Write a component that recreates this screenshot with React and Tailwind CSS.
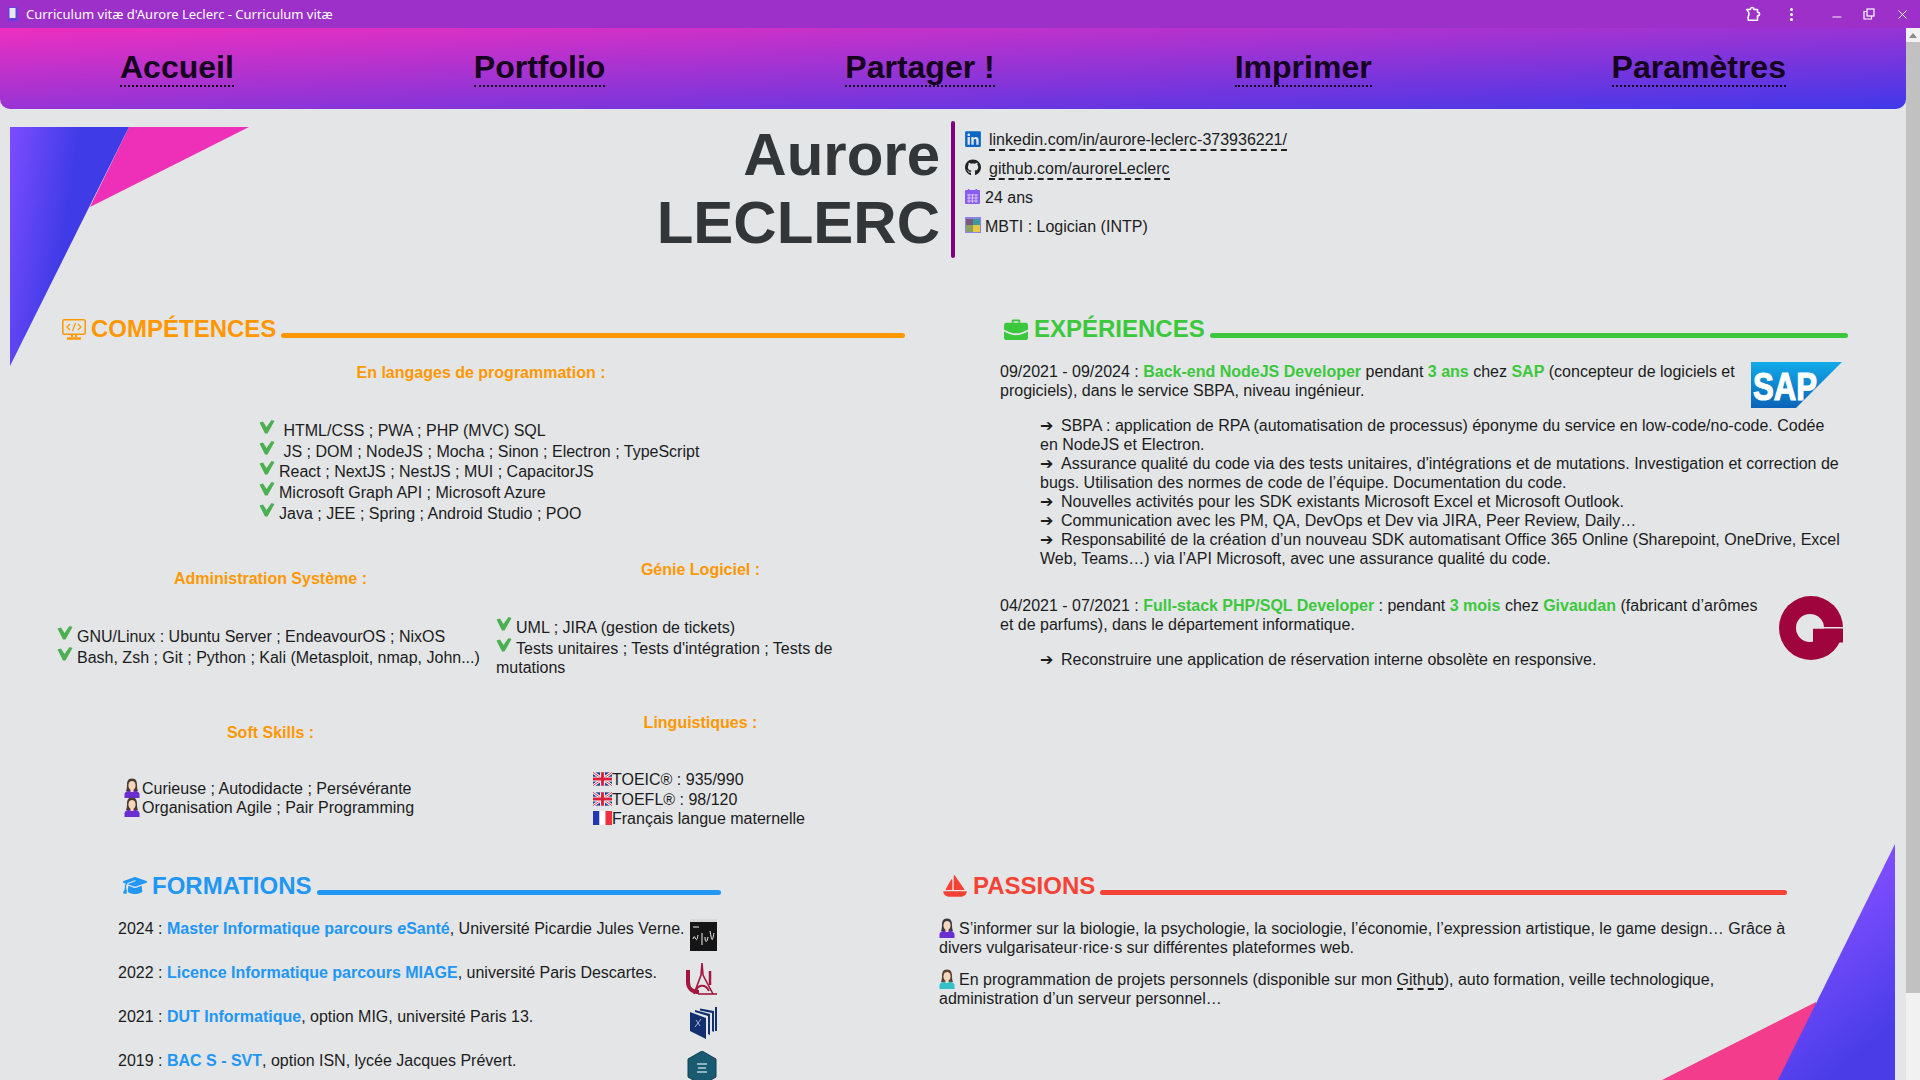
import { EllipsisVertical, Minus, X } from 'lucide-react';
import { FaLinkedin, FaGithub, FaGraduationCap, FaSailboat } from 'react-icons/fa6';

function Check() {
    return (
        <svg viewBox="0 0 16 14" className="inline-block w-[16px] h-[14px] mr-[4px] align-[2px]">
            <path d="M0.5 2.5 L4 1.5 L7.5 7 L12.5 0 L15.5 1 L8.5 13.5 L6 13.5 Z" fill="#4caf50" />
        </svg>
    );
}

function Person({ body = '#6a2fd0', hair = '#4a3a30', wide = false }) {
    return (
        <svg viewBox="0 0 16 20" className={`inline-block h-[20px] align-[-4px] ${wide ? 'w-[20px] pr-[4px]' : 'w-[18px] pr-[2px]'}`}>
            <path d="M8 0.5 C3.5 0.5 3 4 3 7 C3 10 2.5 12 2 13 L14 13 C13.5 12 13 10 13 7 C13 4 12.5 0.5 8 0.5 Z" fill={hair} />
            <ellipse cx="8" cy="7.5" rx="3.6" ry="4.6" fill="#f6d5bd" />
            <path d="M0.5 20 L0.5 16 C1 13.5 4 12.5 8 12.5 C12 12.5 15 13.5 15.5 16 L15.5 20 Z" fill={body} />
            <rect x="6.5" y="10.5" width="3" height="3.5" fill="#f6d5bd" />
        </svg>
    );
}

function FlagUk() {
    return (
        <svg viewBox="0 0 20 14" className="inline-block w-[19px] h-[14px] align-[-1px]">
            <rect width="20" height="14" fill="#1f3f8f" />
            <path d="M0 0 L20 14 M20 0 L0 14" stroke="#fff" strokeWidth="3" />
            <path d="M0 0 L20 14 M20 0 L0 14" stroke="#d8203a" strokeWidth="1" />
            <path d="M10 0 V14 M0 7 H20" stroke="#fff" strokeWidth="5" />
            <path d="M10 0 V14 M0 7 H20" stroke="#d8203a" strokeWidth="3" />
        </svg>
    );
}

function FlagFr() {
    return (
        <svg viewBox="0 0 19 14" className="inline-block w-[19px] h-[14px] align-[-1px]">
            <rect width="6.5" height="14" fill="#2338b0" />
            <rect x="6.5" width="6" height="14" fill="#fff" />
            <rect x="12.5" width="6.5" height="14" fill="#ee3040" />
        </svg>
    );
}

function MonitorCode() {
    return (
        <svg viewBox="0 0 24 21" className="w-[24px] h-[21px] mb-[3px] ml-[1px] -mr-[1px]" fill="none" stroke="#ff9800">
            <rect x="0.8" y="0.8" width="22.4" height="14.5" rx="1.5" strokeWidth="1.5" />
            <path d="M8 5 L5 8 L8 11 M16 5 L19 8 L16 11 M13.5 4 L10.5 12" strokeWidth="1.2" />
            <path d="M10 15 V18 M14 15 V18" strokeWidth="2" />
            <path d="M5 19.5 H19" strokeWidth="2.4" />
        </svg>
    );
}

function Briefcase() {
    return (
        <svg viewBox="0 0 25 22" className="w-[24px] h-[23px] mb-[2px] ml-[1px]">
            <path d="M8 4 V2 C8 1 9 0.5 10 0.5 H15 C16 0.5 17 1 17 2 V4 H15 V2.5 H10 V4 Z" fill="#3cc83c" />
            <path d="M2.5 4 H22.5 C24 4 25 5 25 6.5 V11 C20 14 16 15 12.5 15 C9 15 5 14 0 11 V6.5 C0 5 1 4 2.5 4 Z" fill="#3cc83c" />
            <path d="M0 13 C4 15.5 9 17 12.5 17 C16 17 21 15.5 25 13 V19.5 C25 21 24 22 22.5 22 H2.5 C1 22 0 21 0 19.5 Z" fill="#3cc83c" />
        </svg>
    );
}

function SapLogo() {
    return (
        <svg viewBox="0 0 91 46" className="float-right w-[91px] h-[46px] ml-[15px] mr-[6px]">
            <defs>
                <linearGradient id="sapBlue" x1="0" y1="0" x2="0" y2="1">
                    <stop offset="0" stopColor="#12aae8" />
                    <stop offset="1" stopColor="#0a64b8" />
                </linearGradient>
            </defs>
            <polygon points="0,0 91,0 45,46 0,46" fill="url(#sapBlue)" />
            <text x="2" y="38" fill="#fff" stroke="#fff" strokeWidth="1.2" fontFamily="'Liberation Sans', sans-serif" fontWeight="700" fontSize="38" textLength="64" lengthAdjust="spacingAndGlyphs">SAP</text>
        </svg>
    );
}

function GivaudanLogo() {
    return (
        <svg viewBox="0 0 64 64" className="float-right w-[64px] h-[64px] ml-[21px] mr-[5px]">
            <circle cx="32" cy="32" r="32" fill="#a0043c" />
            <circle cx="31" cy="32" r="14" fill="#e3e5e7" />
            <rect x="34" y="32.5" width="30" height="14" fill="#a0043c" />
            <rect x="26" y="31" width="38" height="1.5" fill="#e3e5e7" />
        </svg>
    );
}

function JulesVerneLogo() {
    return (
        <svg viewBox="0 0 27 32" className="w-[27px] h-[32px] ml-auto">
            <rect width="27" height="32" fill="#151515" />
            <rect y="0" width="27" height="3" fill="#d8d8d8" />
            <path d="M3 8 H9 M3 20 C5 12 6 28 8 16 M12 14 L12 26 M15 18 C15 24 17 24 18 18 M20 12 C22 22 22 24 24 14" stroke="#eee" strokeWidth="1" fill="none" />
        </svg>
    );
}

function ParisLogo() {
    return (
        <svg viewBox="0 0 32 32" className="w-[32px] h-[32px] ml-auto" fill="none" stroke="#a3173f">
            <path d="M3 7 V19 C3 26 8 29 14 29" strokeWidth="4" />
            <path d="M17 0 L16 12 L9 31 M17 0 L18 12 L28 31" strokeWidth="1.6" />
            <path d="M25 8 V22" strokeWidth="2.5" />
            <path d="M11 28 C13 21 21 21 24 28" strokeWidth="1.8" />
            <path d="M13 31 H32" strokeWidth="1.6" />
        </svg>
    );
}

function Paris13Logo() {
    return (
        <svg viewBox="0 0 27 32" className="w-[27px] h-[32px] ml-auto">
            <polygon points="0,5 16,11 16,32 0,24" fill="#12306e" />
            <polygon points="5,3 20,7 20,28 18,27 18,9 5,5" fill="#12306e" />
            <polygon points="10,1.5 24,4 24,25 22,24 22,6 10,3.5" fill="#12306e" />
            <rect x="25" y="0" width="2" height="24" fill="#12306e" />
            <path d="M5 20 L11 12 M6 13 L10 19" stroke="#c8d8f0" strokeWidth="0.8" />
        </svg>
    );
}

function HexLogo() {
    return (
        <svg viewBox="0 0 30 34" className="w-[30px] h-[34px] ml-auto">
            <polygon points="15,0 29,8 29,26 15,34 1,26 1,8" fill="#185a70" stroke="#0e3f52" />
            <path d="M10 13 H20 M11 17 H19 M10 21 H20" stroke="#b8d0d8" strokeWidth="1.4" />
        </svg>
    );
}

function SectionTitle({ icon, color, lineClass, children }) {
    return (
        <div className="flex items-end">
            {icon}
            <h2 className={`text-[24px] leading-[28px] font-bold ml-[6px] ${color}`}>{children}</h2>
            <div className={`flex-1 h-[5px] rounded-full ml-[5px] mb-[5px] ${lineClass}`} />
        </div>
    );
}

function SubTitle({ className = '', children }) {
    return <h3 className={`text-center font-bold text-[#ff9800] leading-[18px] ${className}`}>{children}</h3>;
}

const navLinks = ['Accueil', 'Portfolio', 'Partager !', 'Imprimer', 'Paramètres'];

const formations = [
    { year: '2024', title: <>Master Informatique parcours <i>e</i>Santé</>, rest: ', Université Picardie Jules Verne.', logo: <JulesVerneLogo /> },
    { year: '2022', title: 'Licence Informatique parcours MIAGE', rest: ', université Paris Descartes.', logo: <ParisLogo /> },
    { year: '2021', title: 'DUT Informatique', rest: ', option MIG, université Paris 13.', logo: <Paris13Logo /> },
    { year: '2019', title: 'BAC S - SVT', rest: ', option ISN, lycée Jacques Prévert.', logo: <HexLogo /> },
];

const sapTasks = [
    'SBPA : application de RPA (automatisation de processus) éponyme du service en low-code/no-code. Codée en NodeJS et Electron.',
    'Assurance qualité du code via des tests unitaires, d\'intégrations et de mutations. Investigation et correction de bugs. Utilisation des normes de code de l’équipe. Documentation du code.',
    'Nouvelles activités pour les SDK existants Microsoft Excel et Microsoft Outlook.',
    'Communication avec les PM, QA, DevOps et Dev via JIRA, Peer Review, Daily…',
    'Responsabilité de la création d’un nouveau SDK automatisant Office 365 Online (Sharepoint, OneDrive, Excel Web, Teams…) via l’API Microsoft, avec une assurance qualité du code.',
];

const Green = ({ children }) => <b className="text-[#3cc83c]">{children}</b>;

export default function App() {
    return (
        <div className="h-screen w-full overflow-hidden flex flex-col bg-[#e3e5e7] text-[#1c1c1c] text-[16px] font-['Liberation_Sans',Arial,sans-serif]">
            <header className="h-[28px] shrink-0 flex items-center bg-[#9c30c8] text-white">
                <svg viewBox="0 0 10 14" className="w-[10px] h-[14px] ml-[8px]">
                    <rect width="10" height="14" fill="#6a3de0" />
                    <rect x="1.5" y="1" width="6" height="10" fill="#e8e8f0" />
                </svg>
                <span className="ml-[8px] pt-[1px] text-[13px] font-['Noto_Sans',sans-serif]">Curriculum vitæ d'Aurore Leclerc - Curriculum vitæ</span>
                <div className="ml-auto flex items-center">
                    <svg viewBox="0 0 20 20" className="w-[18px] h-[18px] mr-[21px]" fill="none" stroke="#fff" strokeWidth="1.8" strokeLinejoin="round">
                        <path d="M3 5 H7 C7 2 11 2 11 5 H15 V8 C18 8 18 12 15 12 V17 H5 C4 15 4.5 13 5 12 C6 10 5 7 3 5 Z" />
                    </svg>
                    <EllipsisVertical className="w-[17px] h-[17px] mr-[30px]" strokeWidth={2.4} />
                    <Minus className="w-[14px] h-[14px] mr-[19px] mt-[6px]" strokeWidth={1.6} />
                    <svg viewBox="0 0 12 12" className="w-[12px] h-[12px] mr-[20px]" fill="none" stroke="#fff" strokeWidth="1.2">
                        <rect x="4" y="1" width="7" height="7" />
                        <path d="M4 3.5 H1 V11 H8.5 V8" />
                    </svg>
                    <X className="w-[15px] h-[15px] mr-[10px]" strokeWidth={1.6} />
                </div>
            </header>
            <div className="flex flex-1 min-h-0">
                <main className="relative flex-1 min-w-0 overflow-hidden">
                    <nav className="h-[81px] flex justify-around items-center rounded-b-[10px] bg-linear-to-br/srgb from-[#ee2fc0] to-[#4038ea]">
                        {navLinks.map((link) => (
                            <a key={link} className="text-[32px] font-bold leading-[35px] text-[#160020] border-b-2 border-dotted border-[#160020]">{link}</a>
                        ))}
                    </nav>

                    {/* corner shapes */}
                    <svg className="absolute left-[10px] top-[99px] w-[240px] h-[240px] pointer-events-none" viewBox="0 0 240 240">
                        <defs>
                            <linearGradient id="tlBlue" x1="0" y1="0" x2="1" y2="0.3">
                                <stop offset="0" stopColor="#7c4dff" />
                                <stop offset="0.55" stopColor="#3f3be6" />
                            </linearGradient>
                        </defs>
                        <polygon points="119,0 239,0 80,80" fill="#ee2fb8" />
                        <polygon points="0,0 119,0 0,239" fill="url(#tlBlue)" />
                    </svg>
                    <svg className="absolute left-[1662px] top-[816px] w-[233px] h-[236px] pointer-events-none" viewBox="0 0 233 236">
                        <defs>
                            <linearGradient id="brBlue" x1="0" y1="0" x2="0.4" y2="1">
                                <stop offset="0.4" stopColor="#7c4dff" />
                                <stop offset="1" stopColor="#4a3de8" />
                            </linearGradient>
                        </defs>
                        <polygon points="154,158 154,236 0,236" fill="#f43c8c" />
                        <polygon points="233,0 233,236 116,236" fill="url(#brBlue)" />
                    </svg>

                    <section className="relative flex mt-[11px] h-[195px]">
                        <h1 className="w-[940px] pt-[1px] text-right text-[60px] leading-[68px] font-bold text-[#333638]">Aurore<br />LECLERC</h1>
                        <div className="w-[4px] h-[137px] mt-[1px] ml-[11px] rounded-full bg-[#800080]" />
                        <div className="ml-[10px] pt-[7px]">
                            <div className="h-[28.5px] flex items-center">
                                <FaLinkedin className="w-[16px] h-[18px] text-[#0a66c2] mb-[5px]" />
                                <a className="ml-[8px] border-b-2 border-dashed border-[#222] leading-[18px]">linkedin.com/in/aurore-leclerc-373936221/</a>
                            </div>
                            <div className="h-[28.5px] flex items-center">
                                <FaGithub className="w-[16px] h-[17px] text-[#222] mb-[5px]" />
                                <a className="ml-[8px] border-b-2 border-dashed border-[#222] leading-[18px]">github.com/auroreLeclerc</a>
                            </div>
                            <div className="h-[28.5px] flex items-center">
                                <svg viewBox="0 0 15 15" className="w-[15px] h-[15px] mb-[4px]">
                                    <rect y="1" width="15" height="14" rx="1" fill="#8b5cf0" />
                                    <rect x="3" width="1.5" height="3" fill="#8b5cf0" />
                                    <rect x="10.5" width="1.5" height="3" fill="#8b5cf0" />
                                    <path d="M2 6 H13 M2 9 H13 M2 12 H13 M4 5 V14 M7.5 5 V14 M11 5 V14" stroke="#d8ccfa" strokeWidth="0.9" />
                                </svg>
                                <span className="ml-[5px]">24 ans</span>
                            </div>
                            <div className="h-[28.5px] flex items-center">
                                <svg viewBox="0 0 16 16" className="w-[16px] h-[16px] mb-[4px]">
                                    <rect width="16" height="16" fill="#8d82e8" />
                                    <rect x="1" y="2" width="7" height="6" fill="#7a5a7a" />
                                    <rect x="8" y="2" width="7" height="6" fill="#3f9a9a" />
                                    <rect x="1" y="8" width="7" height="7" fill="#8aa060" />
                                    <rect x="8" y="8" width="7" height="7" fill="#e8c840" />
                                </svg>
                                <span className="ml-[4px]">MBTI : Logician (INTP)</span>
                            </div>
                        </div>
                    </section>

                    <section className="relative flex h-[557px]">
                        <div className="w-[961px] pl-[61px] pr-[56px]">
                            <SectionTitle color="text-[#ff9800]" lineClass="bg-[#ff9800]" icon={<MonitorCode />}>COMPÉTENCES</SectionTitle>
                            <SubTitle className="mt-[21px] pr-[4px]">En langages de programmation :</SubTitle>
                            <ul className="ml-[198px] mt-[38px] leading-[19px]">
                                <li className="h-[20.7px]"><Check /> HTML/CSS ; PWA ; PHP (MVC) SQL</li>
                                <li className="h-[20.7px]"><Check /> JS ; DOM ; NodeJS ; Mocha ; Sinon ; Electron ; TypeScript</li>
                                <li className="h-[20.7px]"><Check />React ; NextJS ; NestJS ; MUI ; CapacitorJS</li>
                                <li className="h-[20.7px]"><Check />Microsoft Graph API ; Microsoft Azure</li>
                                <li className="h-[20.7px]"><Check />Java ; JEE ; Spring ; Android Studio ; POO</li>
                            </ul>
                            <div className="-ml-[4px] grid grid-cols-[427px_409px] gap-x-[12px] w-[848px]">
                                <div className="pt-[47px]">
                                    <SubTitle>Administration Système :</SubTitle>
                                    <ul className="mt-[38px] leading-[19px]">
                                        <li className="h-[20.7px]"><Check />GNU/Linux : Ubuntu Server ; EndeavourOS ; NixOS</li>
                                        <li className="h-[20.7px]"><Check />Bash, Zsh ; Git ; Python ; Kali (Metasploit, nmap, John...)</li>
                                    </ul>
                                    <SubTitle className="mt-[56px]">Soft Skills :</SubTitle>
                                    <ul className="mt-[36px] ml-[67px] leading-[19px]">
                                        <li className="h-[19.5px]"><Person />Curieuse ; Autodidacte ; Persévérante</li>
                                        <li className="h-[19.5px]"><Person />Organisation Agile ; Pair Programming</li>
                                    </ul>
                                </div>
                                <div className="pt-[38px]">
                                    <SubTitle>Génie Logiciel :</SubTitle>
                                    <ul className="mt-[38px] leading-[19px]">
                                        <li className="min-h-[20.7px]"><Check />UML ; JIRA (gestion de tickets)</li>
                                        <li className="min-h-[20.7px]"><Check />Tests unitaires ; Tests d'intégration ; Tests de mutations</li>
                                    </ul>
                                    <SubTitle className="mt-[37px]">Linguistiques :</SubTitle>
                                    <ul className="mt-[38px] ml-[97px] leading-[19px]">
                                        <li className="h-[19.5px]"><FlagUk />TOEIC® : 935/990</li>
                                        <li className="h-[19.5px]"><FlagUk />TOEFL® : 98/120</li>
                                        <li className="h-[19.5px]"><FlagFr />Français langue maternelle</li>
                                    </ul>
                                </div>
                            </div>
                        </div>
                        <div className="flex-1 pl-[39px] pr-[58px] leading-[19px]">
                            <div className="ml-[3px]">
                                <SectionTitle color="text-[#3cc83c]" lineClass="bg-[#3cc83c]" icon={<Briefcase />}>EXPÉRIENCES</SectionTitle>
                            </div>
                            <div className="mt-[19px]">
                                <SapLogo />
                                <p>09/2021 - 09/2024 : <Green>Back-end NodeJS Developer</Green> pendant <Green>3 ans</Green> chez <Green>SAP</Green> (concepteur de logiciels et progiciels), dans le service SBPA, niveau ingénieur.</p>
                                <ul className="mt-[16px] ml-[40px] mr-[6px] clear-right">
                                    {sapTasks.map((task) => <li key={task}>{'➔\u2002'}{task}</li>)}
                                </ul>
                            </div>
                            <div className="mt-[28px]">
                                <GivaudanLogo />
                                <p>04/2021 - 07/2021 : <Green>Full-stack PHP/SQL Developer</Green> : pendant <Green>3 mois</Green> chez <Green>Givaudan</Green> (fabricant d’arômes et de parfums), dans le département informatique.</p>
                                <ul className="mt-[16px] ml-[40px]">
                                    <li>{'➔\u2002'}Reconstruire une application de réservation interne obsolète en responsive.</li>
                                </ul>
                            </div>
                        </div>
                    </section>

                    <section className="relative flex">
                        <div className="w-[939px] pl-[118px] pr-[218px]">
                            <div className="ml-[4px]">
                                <SectionTitle color="text-[#2196f3]" lineClass="bg-[#2196f3]" icon={<FaGraduationCap className="w-[24px] h-[23px] mb-[3px] ml-[1px] -mr-[1px] text-[#2196f3]" />}>FORMATIONS</SectionTitle>
                            </div>
                            <div className="mt-[19px]">
                                {formations.map((item) => (
                                    <div key={item.year} className="flex h-[44px] w-[599px]">
                                        <p className="leading-[19px] whitespace-nowrap">{item.year} : <b className="text-[#2196f3]">{item.title}</b>{item.rest}</p>
                                        {item.logo}
                                    </div>
                                ))}
                            </div>
                        </div>
                        <div className="w-[848px] leading-[19px]">
                            <div className="ml-[4px]">
                                <SectionTitle color="text-[#f44336]" lineClass="bg-[#f44336]" icon={<FaSailboat className="w-[24px] h-[26px] mb-[1px] text-[#f44336]" />}>PASSIONS</SectionTitle>
                            </div>
                            <p className="mt-[18px]"><Person wide body="#6a2fd0" hair="#3a3a40" />S’informer sur la biologie, la psychologie, la sociologie, l’économie, l’expression artistique, le game design… Grâce à divers vulgarisateur·rice·s sur différentes plateformes web.</p>
                            <p className="mt-[12px]"><Person wide body="#35c0c8" hair="#5a4030" />En programmation de projets personnels (disponible sur mon <a className="border-b-2 border-dashed border-[#222]">Github</a>), auto formation, veille technologique, administration d’un serveur personnel…</p>
                        </div>
                    </section>
                </main>
                <aside className="w-[14px] shrink-0 bg-[#f1f1f1] flex flex-col items-center">
                    <div className="h-[14px] flex items-center">
                        <div className="w-0 h-0 border-x-[4px] border-x-transparent border-b-[5px] border-b-[#8a8a8a]" />
                    </div>
                    <div className="w-full h-[951px] bg-[#c1c1c1]" />
                </aside>
            </div>
        </div>
    );
}
